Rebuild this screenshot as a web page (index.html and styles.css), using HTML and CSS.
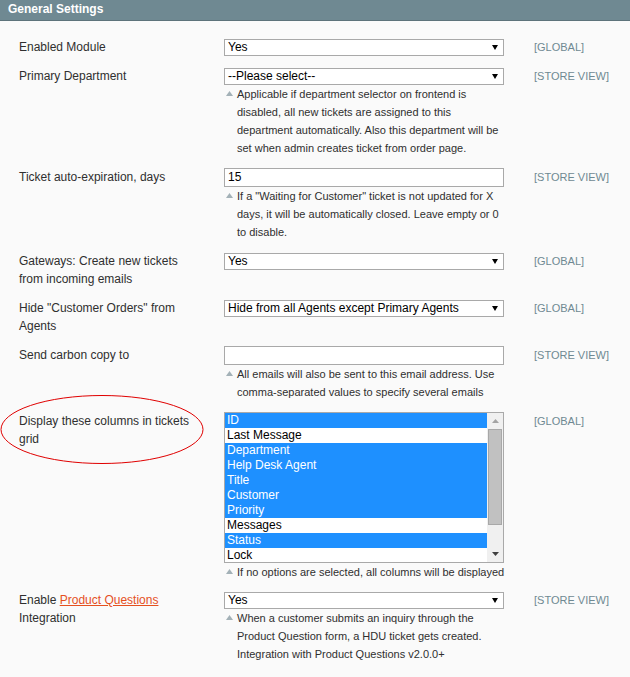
FILE: index.html
```html
<!DOCTYPE html>
<html lang="en">
<head>
  <meta charset="UTF-8">
  <meta name="viewport" content="width=device-width, initial-scale=1.0">
  <title>General Settings</title>
  <link rel="stylesheet" href="styles.css">
</head>
<body>
  <div class="page">
    <div class="section-head">General Settings</div>

    <div class="form-list">
      <!-- Enabled Module -->
      <div class="row">
        <div class="label">Enabled Module</div>
        <div class="value">
          <div class="select"><span>Yes</span><svg class="arrow" width="6" height="5" viewBox="0 0 6 5"><path d="M0 0H6L3 5Z"/></svg></div>
        </div>
        <div class="scope">[GLOBAL]</div>
      </div>

      <!-- Primary Department -->
      <div class="row">
        <div class="label">Primary Department</div>
        <div class="value">
          <div class="select"><span>--Please select--</span><svg class="arrow" width="6" height="5" viewBox="0 0 6 5"><path d="M0 0H6L3 5Z"/></svg></div>
          <div class="note">
            <span class="note-icon"><svg width="7" height="5" viewBox="0 0 7 5"><path d="M0 5H7L3.5 0Z"/></svg></span>
            <span class="note-text">Applicable if department selector on frontend is disabled, all new tickets are assigned to this department automatically. Also this department will be set when admin creates ticket from order page.</span>
          </div>
        </div>
        <div class="scope">[STORE VIEW]</div>
      </div>

      <!-- Ticket auto-expiration -->
      <div class="row">
        <div class="label">Ticket auto-expiration, days</div>
        <div class="value">
          <div class="input">15</div>
          <div class="note">
            <span class="note-icon"><svg width="7" height="5" viewBox="0 0 7 5"><path d="M0 5H7L3.5 0Z"/></svg></span>
            <span class="note-text">If a "Waiting for Customer" ticket is not updated for X days, it will be automatically closed. Leave empty or 0 to disable.</span>
          </div>
        </div>
        <div class="scope">[STORE VIEW]</div>
      </div>

      <!-- Gateways -->
      <div class="row">
        <div class="label">Gateways: Create new tickets from incoming emails</div>
        <div class="value">
          <div class="select"><span>Yes</span><svg class="arrow" width="6" height="5" viewBox="0 0 6 5"><path d="M0 0H6L3 5Z"/></svg></div>
        </div>
        <div class="scope">[GLOBAL]</div>
      </div>

      <!-- Hide Customer Orders -->
      <div class="row">
        <div class="label">Hide "Customer Orders" from Agents</div>
        <div class="value">
          <div class="select"><span>Hide from all Agents except Primary Agents</span><svg class="arrow" width="6" height="5" viewBox="0 0 6 5"><path d="M0 0H6L3 5Z"/></svg></div>
        </div>
        <div class="scope">[GLOBAL]</div>
      </div>

      <!-- Send carbon copy -->
      <div class="row">
        <div class="label">Send carbon copy to</div>
        <div class="value">
          <div class="input"></div>
          <div class="note">
            <span class="note-icon"><svg width="7" height="5" viewBox="0 0 7 5"><path d="M0 5H7L3.5 0Z"/></svg></span>
            <span class="note-text">All emails will also be sent to this email address. Use comma-separated values to specify several emails</span>
          </div>
        </div>
        <div class="scope">[STORE VIEW]</div>
      </div>

      <!-- Grid columns -->
      <div class="row row-tight">
        <div class="label">Display these columns in tickets grid</div>
        <div class="value">
          <div class="multi">
            <div class="options">
              <div class="option selected">ID</div>
              <div class="option">Last Message</div>
              <div class="option selected">Department</div>
              <div class="option selected">Help Desk Agent</div>
              <div class="option selected">Title</div>
              <div class="option selected">Customer</div>
              <div class="option selected">Priority</div>
              <div class="option">Messages</div>
              <div class="option selected">Status</div>
              <div class="option">Lock</div>
            </div>
            <div class="scrollbar">
              <div class="scroll-btn up"><svg width="7" height="4" viewBox="0 0 7 4"><path d="M0 4H7L3.5 0Z"/></svg></div>
              <div class="thumb"></div>
              <div class="scroll-space"></div>
              <div class="scroll-btn down"><svg width="7" height="4" viewBox="0 0 7 4"><path d="M0 0H7L3.5 4Z"/></svg></div>
            </div>
          </div>
          <div class="note">
            <span class="note-icon"><svg width="7" height="5" viewBox="0 0 7 5"><path d="M0 5H7L3.5 0Z"/></svg></span>
            <span class="note-text">If no options are selected, all columns will be displayed</span>
          </div>
        </div>
        <div class="scope">[GLOBAL]</div>
      </div>

      <!-- Product Questions -->
      <div class="row">
        <div class="label">Enable <a class="link" href="#">Product Questions</a> Integration</div>
        <div class="value">
          <div class="select"><span>Yes</span><svg class="arrow" width="6" height="5" viewBox="0 0 6 5"><path d="M0 0H6L3 5Z"/></svg></div>
          <div class="note">
            <span class="note-icon"><svg width="7" height="5" viewBox="0 0 7 5"><path d="M0 5H7L3.5 0Z"/></svg></span>
            <span class="note-text">When a customer submits an inquiry through the Product Question form, a HDU ticket gets created. Integration with Product Questions v2.0.0+</span>
          </div>
        </div>
        <div class="scope">[STORE VIEW]</div>
      </div>
    </div>

    <!-- red marker around the grid columns label -->
    <svg class="marker" width="206" height="72" viewBox="0 0 206 72">
      <ellipse cx="102" cy="35.5" rx="101" ry="34" fill="none" stroke="#e00000" stroke-width="1"/>
    </svg>
  </div>
</body>
</html>
```

FILE: styles.css
```css
body {
  margin: 0;
  background-color: #fafafa;
  font-family: "Liberation Sans", Arial, sans-serif;
  font-size: 12px;
  color: #2f2f2f;
}
.page {
  position: relative;
  min-height: 677px;
}
.section-head {
  height: 20px;
  line-height: 19px;
  padding: 0 8px;
  background-color: #6f8992;
  border-bottom: 1px solid #5d737b;
  color: #fff;
  font-weight: bold;
}
.form-list {
  padding: 17px 0 0 19px;
}
.row {
  display: flex;
  align-items: flex-start;
  margin-bottom: 11px;
}
.row-tight {
  margin-bottom: 10px;
}
.label {
  width: 180px;
  margin-right: 25px;
  line-height: 18px;
}
.link {
  color: #e5501e;
  text-decoration: underline;
}
.value {
  width: 280px;
  flex: none;
}
.scope {
  margin-left: 30px;
  font-size: 11px;
  line-height: 18px;
  color: #6f8992;
}
.select {
  height: 17px;
  margin-top: 1px;
  box-sizing: border-box;
  display: flex;
  align-items: center;
  justify-content: space-between;
  padding: 0 5px 0 3px;
  border: 1px solid #a9a9a9;
  background-color: #fff;
  line-height: 15px;
  color: #000;
}
.arrow {
  fill: #000;
}
.input {
  height: 19px;
  box-sizing: border-box;
  padding: 0 3px;
  border: 1px solid #a9a9a9;
  background-color: #fff;
  line-height: 17px;
  color: #000;
}
.note {
  display: flex;
  font-size: 11px;
  line-height: 18px;
}
.note-icon {
  width: 13px;
  flex: none;
}
.note-icon svg {
  display: block;
  margin: 6px 0 0 2px;
  fill: #a3b1b7;
}
.note-text {
  width: 270px;
  flex: none;
}
.multi {
  display: flex;
  height: 151px;
  box-sizing: border-box;
  overflow: hidden;
  border: 1px solid #a9a9a9;
  background-color: #fff;
}
.options {
  flex: 1;
}
.option {
  height: 15px;
  line-height: 15px;
  padding-left: 2px;
  color: #000;
}
.option.selected {
  background-color: #1e90ff;
  color: #fff;
}
.scrollbar {
  width: 16px;
  display: flex;
  flex-direction: column;
  align-items: center;
  background-color: #f0f0f0;
}
.scroll-btn {
  height: 16px;
  width: 16px;
  flex: none;
  display: flex;
  align-items: center;
  justify-content: center;
}
.scroll-btn.up svg {
  fill: #a3a3a3;
}
.scroll-btn.down svg {
  fill: #404040;
}
.thumb {
  width: 14px;
  height: 96px;
  flex: none;
  box-sizing: border-box;
  background-color: #c1c1c1;
  border: 1px solid #a8a8a8;
}
.scroll-space {
  flex: 1;
}
.marker {
  position: absolute;
  left: 0;
  top: 394px;
}
```
